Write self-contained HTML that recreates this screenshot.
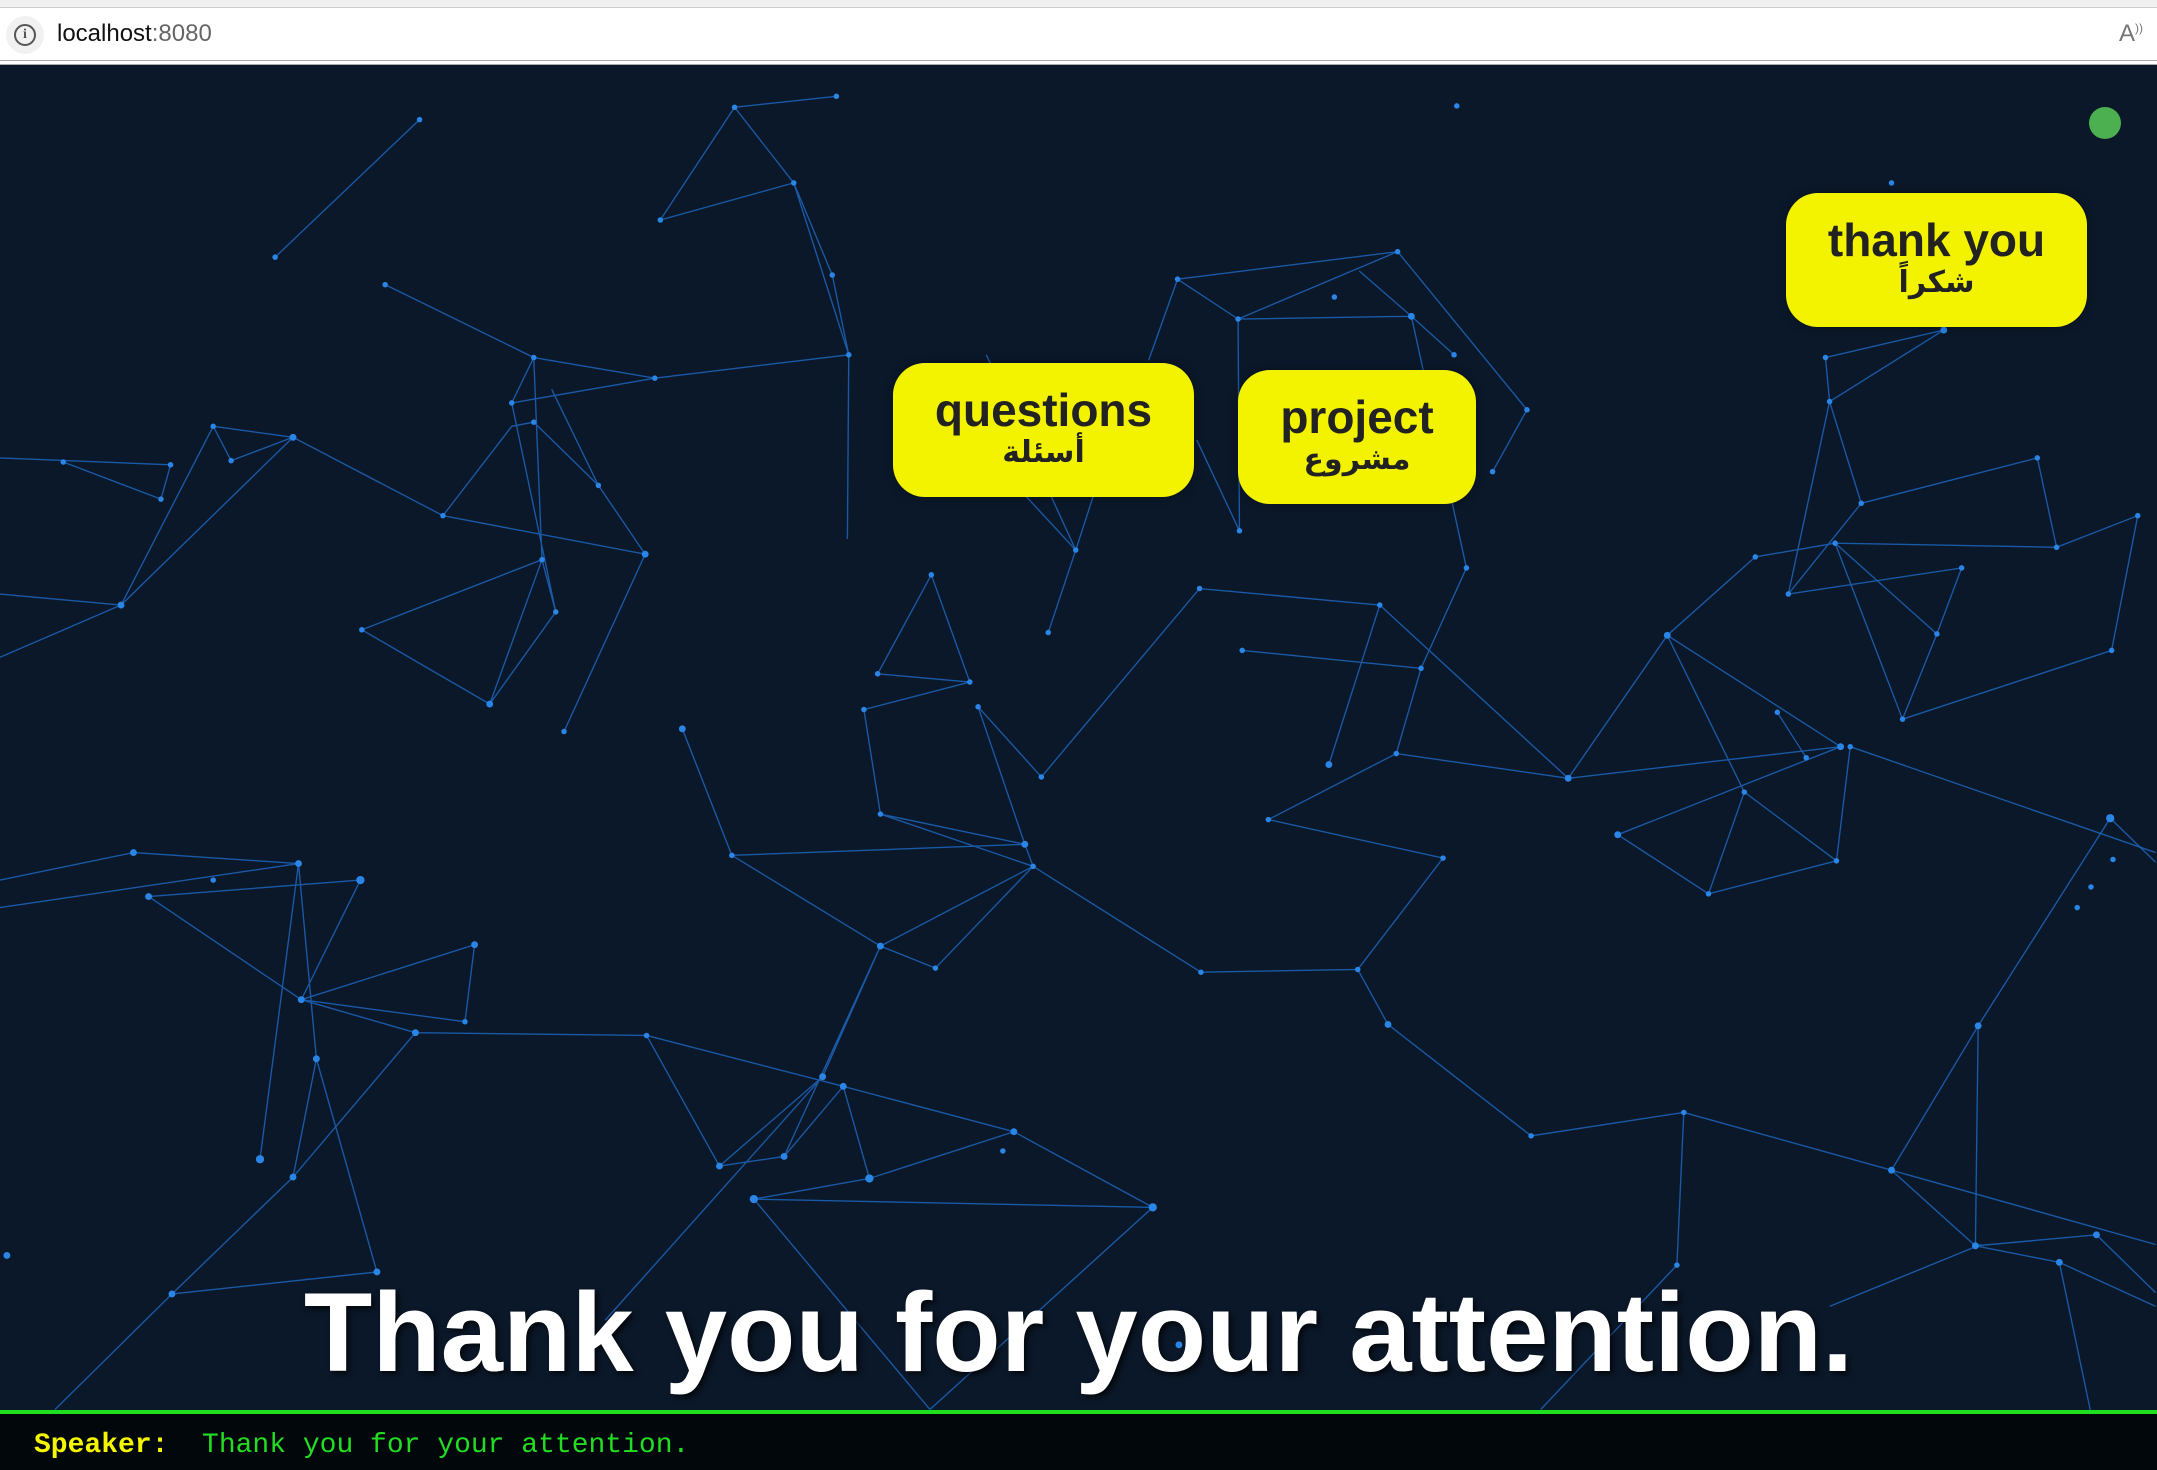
<!DOCTYPE html>
<html><head><meta charset="utf-8"><style>
html,body{margin:0;padding:0;width:2157px;height:1470px;overflow:hidden;background:#0b1829;font-family:"Liberation Sans",sans-serif}
#top{position:absolute;left:0;top:0;width:2157px;height:65px;background:#fff}
#top .g{position:absolute;left:0;top:0;width:100%;height:7px;background:#f0f0f0;border-bottom:1px solid #ccc}
#top .l{position:absolute;left:0;top:60px;width:100%;height:5px;border-top:1px solid #aaa;border-bottom:1px solid #aaa;background:#fff;box-sizing:border-box}
#top .ic{position:absolute;left:6px;top:16px;width:38px;height:38px;border-radius:50%;background:#f1f1f1}
#top .ic div{position:absolute;left:8px;top:8px;width:18px;height:18px;border:2px solid #555;border-radius:50%;font:bold 14px "Liberation Serif",serif;color:#555;text-align:center;line-height:18px}
#top .url{position:absolute;left:57px;top:20px;font-size:24px;color:#111}
#top .url span{color:#666}
#top .aa{position:absolute;right:14px;top:20px;font-size:24px;color:#777}
svg{position:absolute;left:0;top:0}
.box{position:absolute;background:#f3f300;border-radius:32px;display:flex;flex-direction:column;align-items:center;justify-content:center;color:#222;box-shadow:0 0 10px rgba(0,0,0,.3)}
.box .e{font-weight:bold;font-size:46px;line-height:46px}
.box .a{font-family:"DejaVu Sans",sans-serif;font-weight:bold;font-size:30px;line-height:40px}
#title{position:absolute;left:0;width:2157px;top:1271px;text-align:center;color:#fff;font-weight:bold;font-size:112px;text-shadow:3px 3px 6px rgba(0,0,0,.7);line-height:124px}
#bot{position:absolute;left:0;top:1410px;width:2157px;height:60px;background:#02070c;border-top:4px solid #1ee01e;box-sizing:border-box}
#bot div{position:absolute;left:34px;top:16px;font-family:"Liberation Mono",monospace;font-size:28px;color:#22dd22;white-space:pre}
#bot b{color:#f5f500}
</style></head><body>
<svg width="2157" height="1470" viewBox="0 0 1568 1069" preserveAspectRatio="none">
<g stroke="#1f6fcf" stroke-width="1" stroke-opacity="0.75" fill="none" id="L">
<path d="M534 78L608 70M534 78L480 160L577 133M534 78L577 133L605 200L617 258M577 133L617 258M305 87L200 187M280 207L388 260L476 275L617 258L616 392M388 260L372 293L476 275M401 283L435 353L469 403L322 375L372 310L388 307L435 353M394 407L404 445L356 512M394 407L356 512L263 458L394 407M469 403L410 532M213 318L155 310L168 335L213 318L322 375M155 310L88 440M213 318L88 440M0 333L124 338L117 363M0 432L88 440L0 478M46 336L117 363M388 260L394 407M372 293L404 445"/>
<path d="M856 203L900 232L1016 183M856 203L1016 183M856 203L835 262M900 232L1026 230L1057 258M1016 183L1110 298L1085 343M1026 230L1066 413M900 232L901 386L870 320M988 197L1026 230M717 258L782 400L762 460M745 360L782 400L795 360"/>
<path d="M677 418L638 490L705 496L677 418M628 516L705 496M628 516L640 592L745 614M711 514L757 565M711 514L745 614L751 630L680 704M640 592L751 630M640 688L751 630M532 622L640 688M532 622L496 530M532 622L745 614M757 565L872 428L1003 440L966 556M903 473L1033 486L1015 548L922 596L1049 624L987 705M751 630L873 707L987 705L1009 745L1113 826L1224 809L1219 920M1224 809L1375 851L1438 746L1534 595L1567 627M1003 440L1140 566L1212 462L1338 543M1140 566L1338 543M1176 607L1338 543M1176 607L1242 650L1268 576L1335 626L1345 543M1242 650L1335 626M1212 462L1268 576M1292 518L1313 551M1015 548L1140 566M1066 413L1033 486"/>
<path d="M1276 405L1334 395L1408 461L1383 523L1535 473L1554 375L1495 398L1481 333L1353 366L1300 432L1426 413L1408 461M1334 395L1383 523M1330 292L1353 366M1330 292L1300 432M1327 260L1413 240M1327 260L1330 292L1413 240M1345 543L1567 620M1212 462L1276 405M1334 395L1495 398"/>
<path d="M640 688L598 783L523 848L570 841L613 790L737 823L632 857L548 872L838 878M737 823L838 878M613 790L632 857M470 753L523 848M470 753L613 790M640 688L680 704M548 872L676 1025M838 878L676 1025M640 688L570 841M598 783L440 960"/>
<path d="M97 620L217 628M97 620L0 640M108 652L262 640M0 660L217 628L230 770L213 856L125 941L274 925L230 770M262 640L219 727L345 687L338 743L219 727L302 751L470 753M302 751L213 856M108 652L219 727M189 843L217 628M125 941L40 1025"/>
<path d="M1375 851L1436 906L1524 898L1567 940M1436 906L1497 918L1528 1066M1375 851L1567 905M1219 920L1120 1025M1440 905L1330 950M1438 746L1436 906M1497 918L1567 950"/>
</g>
<g fill="#2a86e6">
<circle cx="534" cy="78" r="2"/><circle cx="608" cy="70" r="2"/><circle cx="480" cy="160" r="2"/><circle cx="577" cy="133" r="2"/><circle cx="605" cy="200" r="2"/><circle cx="617" cy="258" r="2"/><circle cx="305" cy="87" r="2"/><circle cx="200" cy="187" r="2"/><circle cx="280" cy="207" r="2"/><circle cx="388" cy="260" r="2"/><circle cx="476" cy="275" r="2"/><circle cx="372" cy="293" r="2"/><circle cx="435" cy="353" r="2"/><circle cx="469" cy="403" r="2.5"/><circle cx="322" cy="375" r="2"/><circle cx="388" cy="307" r="2"/><circle cx="394" cy="407" r="2"/><circle cx="404" cy="445" r="2"/><circle cx="356" cy="512" r="2.5"/><circle cx="263" cy="458" r="2"/><circle cx="410" cy="532" r="2"/><circle cx="213" cy="318" r="2.5"/><circle cx="155" cy="310" r="2"/><circle cx="168" cy="335" r="2"/><circle cx="88" cy="440" r="2.5"/><circle cx="124" cy="338" r="2"/><circle cx="117" cy="363" r="2"/><circle cx="46" cy="336" r="2"/>
<circle cx="856" cy="203" r="2"/><circle cx="900" cy="232" r="2"/><circle cx="1016" cy="183" r="2"/><circle cx="1026" cy="230" r="2.5"/><circle cx="1057" cy="258" r="2"/><circle cx="1110" cy="298" r="2"/><circle cx="1085" cy="343" r="2"/><circle cx="1066" cy="413" r="2"/><circle cx="901" cy="386" r="2"/><circle cx="782" cy="400" r="2"/><circle cx="762" cy="460" r="2"/><circle cx="1059" cy="77" r="2"/><circle cx="1375" cy="133" r="2"/><circle cx="970" cy="216" r="2"/>
<circle cx="677" cy="418" r="2"/><circle cx="638" cy="490" r="2"/><circle cx="705" cy="496" r="2"/><circle cx="628" cy="516" r="2"/><circle cx="640" cy="592" r="2"/><circle cx="745" cy="614" r="2.5"/><circle cx="711" cy="514" r="2"/><circle cx="757" cy="565" r="2"/><circle cx="751" cy="630" r="2"/><circle cx="680" cy="704" r="2"/><circle cx="640" cy="688" r="2.5"/><circle cx="532" cy="622" r="2"/><circle cx="496" cy="530" r="2.5"/><circle cx="872" cy="428" r="2"/><circle cx="1003" cy="440" r="2"/><circle cx="966" cy="556" r="2.5"/><circle cx="903" cy="473" r="2"/><circle cx="1033" cy="486" r="2"/><circle cx="1015" cy="548" r="2"/><circle cx="922" cy="596" r="2"/><circle cx="1049" cy="624" r="2"/><circle cx="987" cy="705" r="2"/><circle cx="873" cy="707" r="2"/><circle cx="1009" cy="745" r="2.5"/><circle cx="1113" cy="826" r="2"/><circle cx="1224" cy="809" r="2"/><circle cx="1219" cy="920" r="2"/><circle cx="1375" cy="851" r="2.5"/><circle cx="1438" cy="746" r="2.5"/><circle cx="1534" cy="595" r="3"/><circle cx="1140" cy="566" r="2.5"/><circle cx="1212" cy="462" r="2.5"/><circle cx="1338" cy="543" r="2.5"/><circle cx="1176" cy="607" r="2.5"/><circle cx="1242" cy="650" r="2"/><circle cx="1268" cy="576" r="2"/><circle cx="1335" cy="626" r="2"/><circle cx="1345" cy="543" r="2"/><circle cx="1292" cy="518" r="2"/><circle cx="1313" cy="551" r="2"/>
<circle cx="1276" cy="405" r="2"/><circle cx="1334" cy="395" r="2"/><circle cx="1408" cy="461" r="2"/><circle cx="1383" cy="523" r="2"/><circle cx="1535" cy="473" r="2"/><circle cx="1554" cy="375" r="2"/><circle cx="1495" cy="398" r="2"/><circle cx="1481" cy="333" r="2"/><circle cx="1353" cy="366" r="2"/><circle cx="1300" cy="432" r="2"/><circle cx="1426" cy="413" r="2"/><circle cx="1330" cy="292" r="2"/><circle cx="1327" cy="260" r="2"/><circle cx="1413" cy="240" r="2.5"/>
<circle cx="598" cy="783" r="2.5"/><circle cx="523" cy="848" r="2.5"/><circle cx="570" cy="841" r="2.5"/><circle cx="613" cy="790" r="2.5"/><circle cx="737" cy="823" r="2.5"/><circle cx="632" cy="857" r="3"/><circle cx="548" cy="872" r="3"/><circle cx="838" cy="878" r="3"/><circle cx="470" cy="753" r="2"/><circle cx="729" cy="837" r="2"/>
<circle cx="97" cy="620" r="2.5"/><circle cx="217" cy="628" r="2.5"/><circle cx="108" cy="652" r="2.5"/><circle cx="262" cy="640" r="3"/><circle cx="155" cy="640" r="2"/><circle cx="230" cy="770" r="2.5"/><circle cx="213" cy="856" r="2.5"/><circle cx="125" cy="941" r="2.5"/><circle cx="274" cy="925" r="2.5"/><circle cx="219" cy="727" r="2.5"/><circle cx="345" cy="687" r="2.5"/><circle cx="338" cy="743" r="2"/><circle cx="302" cy="751" r="2.5"/><circle cx="189" cy="843" r="3"/><circle cx="5" cy="913" r="2.5"/>
<circle cx="1436" cy="906" r="2.5"/><circle cx="1524" cy="898" r="2.5"/><circle cx="1497" cy="918" r="2.5"/><circle cx="1510" cy="660" r="2"/><circle cx="1520" cy="645" r="2"/><circle cx="1536" cy="625" r="2"/><circle cx="857" cy="978" r="2.5"/>
</g>
</svg>
<div id="top"><div class="g"></div><div class="ic"><div>i</div></div><div class="url">localhost<span>:8080</span></div><div class="aa">A<sup style="font-size:12px">))</sup></div><div class="l"></div></div>
<div style="position:absolute;left:2089px;top:107px;width:32px;height:32px;border-radius:50%;background:#4caf50"></div>
<div class="box" style="left:893px;top:363px;width:301px;height:134px"><div class="e">questions</div><div class="a">أسئلة</div></div>
<div class="box" style="left:1238px;top:370px;width:238px;height:134px"><div class="e">project</div><div class="a">مشروع</div></div>
<div class="box" style="left:1786px;top:193px;width:301px;height:134px"><div class="e">thank you</div><div class="a">شكراً</div></div>
<div id="title">Thank you for your attention.</div>
<div id="bot"><div><b>Speaker:</b>  Thank you for your attention.</div></div>
</body></html>
